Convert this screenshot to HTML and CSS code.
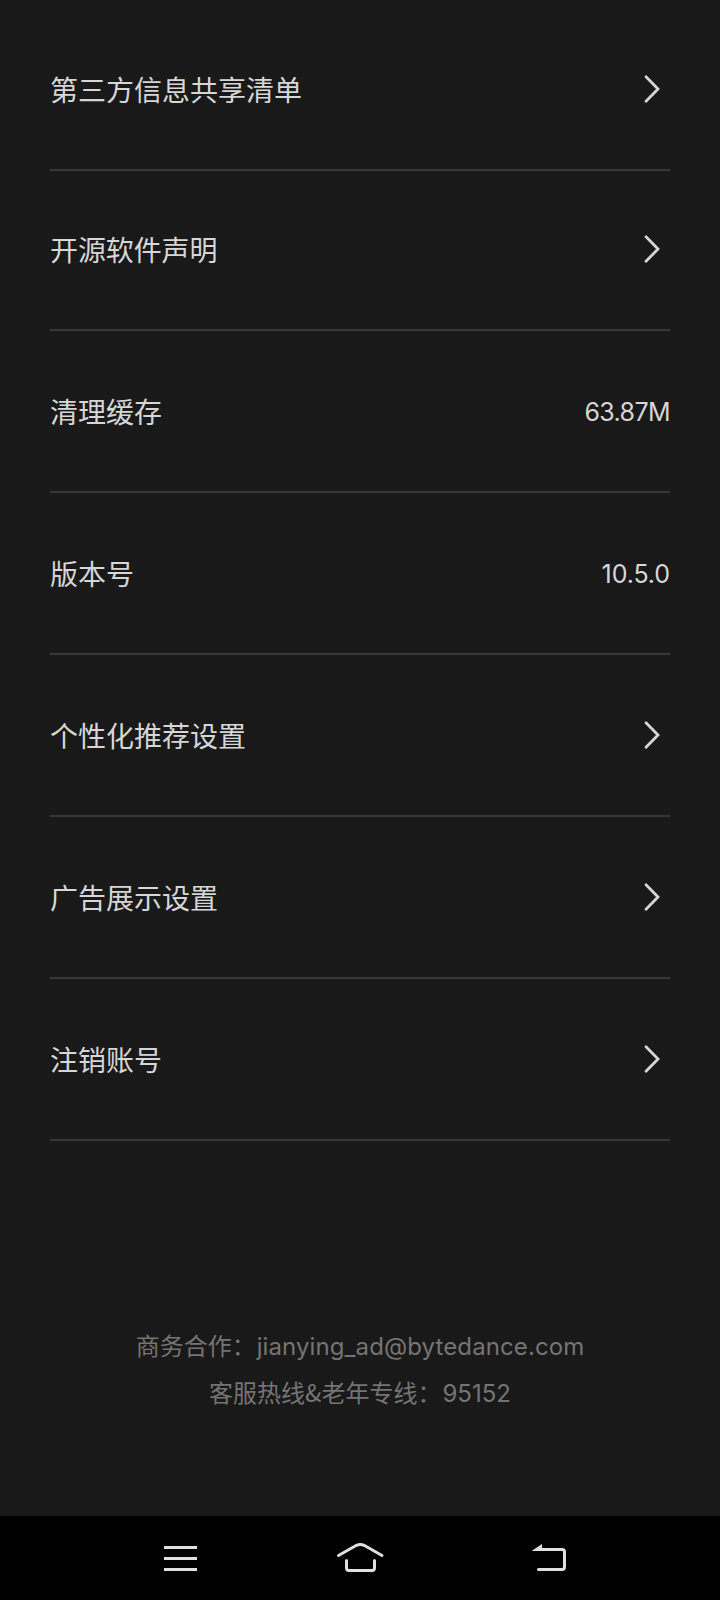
FILE: index.html
```html
<!DOCTYPE html>
<html lang="zh-CN">
<head>
<meta charset="utf-8">
<title>设置</title>
<link rel="stylesheet" href="styles.css">
</head>
<body>
<main class="screen">
  <ul class="list">
    <li class="row"><span class="label">第三方信息共享清单</span><svg class="chevron" viewBox="0 0 18 30"><path d="M2 2.700 14 15 2 27.300"/></svg></li>
    <li class="row row-short"><span class="label">开源软件声明</span><svg class="chevron" viewBox="0 0 18 30"><path d="M2 2.700 14 15 2 27.300"/></svg></li>
    <li class="row"><span class="label">清理缓存</span><span class="value">63.87M</span></li>
    <li class="row"><span class="label">版本号</span><span class="value version">10.5.0</span></li>
    <li class="row"><span class="label">个性化推荐设置</span><svg class="chevron" viewBox="0 0 18 30"><path d="M2 2.700 14 15 2 27.300"/></svg></li>
    <li class="row"><span class="label">广告展示设置</span><svg class="chevron" viewBox="0 0 18 30"><path d="M2 2.700 14 15 2 27.300"/></svg></li>
    <li class="row"><span class="label">注销账号</span><svg class="chevron" viewBox="0 0 18 30"><path d="M2 2.700 14 15 2 27.300"/></svg></li>
  </ul>
  <footer class="contact">
    <p class="contact-line"><span>商务合作：</span><span class="mail">jianying_ad@bytedance.com</span></p>
    <p class="contact-line"><span>客服热线&amp;老年专线：</span><span class="phone">95152</span></p>
  </footer>
</main>
<nav class="navbar">
  <svg class="nav-icon" viewBox="0 0 60 40"><path d="M14 9.500h33M14 20.500h33M14 31.500h33"/></svg>
  <svg class="nav-icon" viewBox="0 0 60 40"><path class="round" d="M8.500 17.500 26.500 7.300q3.800-1.800 7.600 0L52 17.500M16.500 22.500v7.500q0 2.500 2.500 2.500h23q2.500 0 2.500-2.500v-7.500"/></svg>
  <svg class="nav-icon" viewBox="0 0 60 40"><path class="round" d="M30 11.500h22q2.500 0 2.500 2.500v15q0 2.500-2.500 2.500H28.500"/><path class="solid" d="M22 12.800 32 6v7H22z"/></svg>
</nav>
</body>
</html>
```
FILE: styles.css
```css
* { box-sizing: border-box; }
body {
  margin: 0;
  height: 1600px;
  display: flex;
  flex-direction: column;
  background: #191919;
  font-family: "Noto Sans CJK SC", sans-serif;
}
.screen { flex: 1; }
.list { margin: 0; padding: 9px 50px 0; list-style: none; }
.row {
  height: 162px;
  display: flex;
  align-items: center;
  justify-content: space-between;
  border-bottom: 2px solid #383838;
  color: #d6d6d6;
}
.row-short { height: 160px; padding-bottom: 2px; }
.label { font-size: 28px; line-height: 40px; }
.row-short .label { letter-spacing: -0.1px; }
.value { padding-top: 2px; font-family: Inter, sans-serif; font-size: 25px; line-height: 36px; letter-spacing: -0.6px; }
.version { letter-spacing: -0.1px; }
.chevron { width: 18px; height: 30px; margin-right: 8px; }
.chevron path { fill: none; stroke: #d6d6d6; stroke-width: 2.8; stroke-linecap: round; }
.contact { padding-top: 180px; color: #747474; }
.contact-line { margin: 0; height: 47px; display: flex; justify-content: center; align-items: center; gap: 1px; font-size: 24px; }
.mail, .phone { padding-top: 3px; font-family: Inter, sans-serif; }
.mail { letter-spacing: 0.1px; }
.navbar {
  height: 84px;
  padding: 0 150px;
  display: flex;
  justify-content: space-between;
  align-items: center;
  background: #000;
}
.nav-icon { width: 60px; height: 40px; }
.nav-icon path { fill: none; stroke: #e0e0e0; stroke-width: 3; }
.nav-icon .round { stroke-linecap: round; }
.nav-icon .solid { fill: #e0e0e0; stroke: none; }
```
